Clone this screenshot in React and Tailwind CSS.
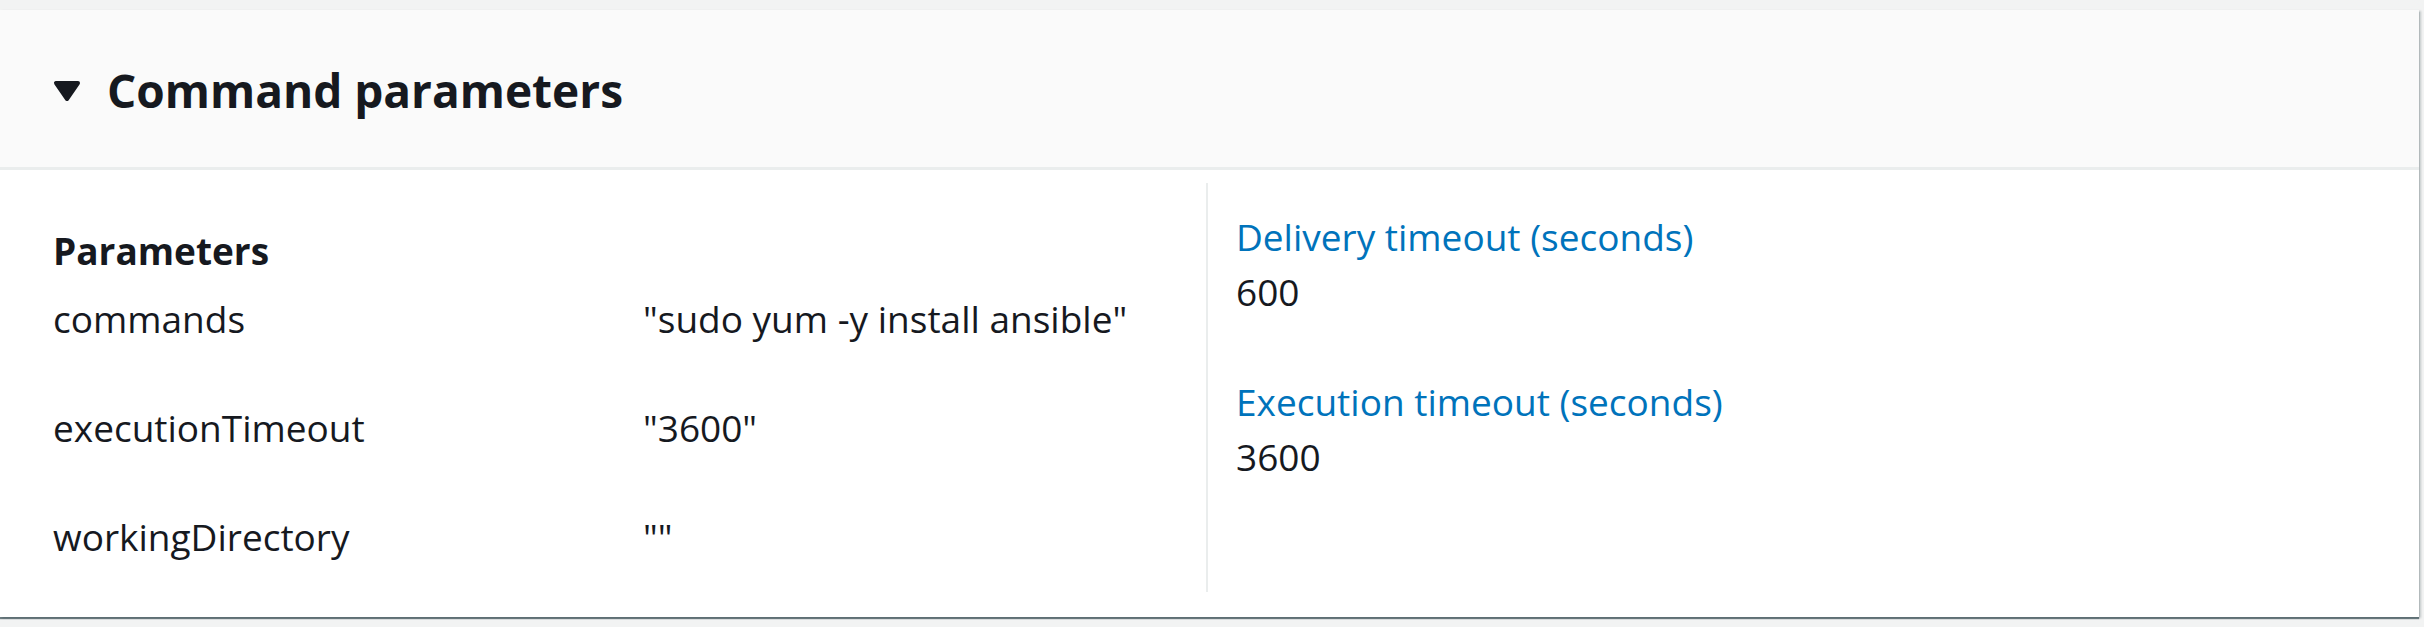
export default function App() {
  const rows = [
    ["commands", "\"sudo yum -y install ansible\""],
    ["executionTimeout", "\"3600\""],
    ["workingDirectory", "\"\""],
  ];
  return (
    <div
      className="w-[2424px] h-[627px] bg-[#f2f3f3] pt-[10px] text-[#16191f] overflow-hidden"
      style={{ fontFamily: '"Open Sans", "Noto Sans", sans-serif' }}
    >
      <div className="w-[2419px] bg-white shadow-[0_2px_1px_0_rgba(0,28,36,0.55),2px_1px_2px_0_rgba(0,28,36,0.2)]">
        <div className="h-[160px] bg-[#fafafa] border-b-[3px] border-[#eaeded] flex items-center pl-[53px]">
          <svg width="28" height="22" viewBox="0 0 28 22" className="mr-[26px] mt-[4px]">
            <polygon points="3,3 25,3 14,19" fill="#16191f" stroke="#16191f" strokeWidth="4" strokeLinejoin="round" />
          </svg>
          <h2 className="text-[46px] font-bold leading-[55px] mt-[3px]">Command parameters</h2>
        </div>
        <div className="flex pt-[13px] pb-[25px]">
          <div className="w-[1206px] pl-[53px] pt-[40px] pb-[28px]">
            <div className="text-[37px] font-bold leading-[55px]">Parameters</div>
            <div className="mt-[13px] grid grid-cols-[590px_1fr] gap-y-[54px] text-[37px] leading-[55px]">
              {rows.map(([k, v]) => (
                <div key={k} className="contents">
                  <div>{k}</div>
                  <div>{v}</div>
                </div>
              ))}
            </div>
          </div>
          <div className="flex-1 border-l-2 border-[#eaeded] pl-[28px] pt-[26px] text-[37px] leading-[55px]">
            <div className="text-[#0073bb]">Delivery timeout (seconds)</div>
            <div>600</div>
            <div className="mt-[55px] text-[#0073bb]">Execution timeout (seconds)</div>
            <div>3600</div>
          </div>
        </div>
      </div>
    </div>
  );
}
